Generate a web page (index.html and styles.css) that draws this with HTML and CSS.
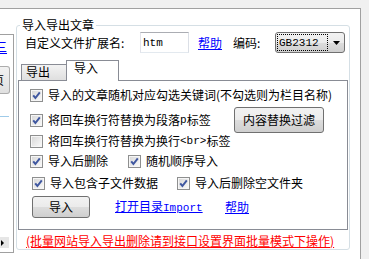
FILE: index.html
```html
<!DOCTYPE html>
<html>
<head>
<meta charset="utf-8">
<link rel="stylesheet" href="styles.css">
</head>
<body>
<div class="window">
  <div class="side">
    <a class="side-link">三</a>
    <div class="side-btn"><span>页</span></div>
    <div class="side-line"></div>
    <div class="side-arrow"><span class="tri"></span></div>
  </div>
  <fieldset class="group">
    <legend>导入导出文章</legend>
    <div class="row-ext">
      <span class="lbl">自定义文件扩展名:</span>
      <span class="input"><span class="lat">htm</span></span>
      <a class="link help1">帮助</a>
      <span class="lbl-enc">编码:</span>
      <span class="select"><span class="focus"><span class="lat">GB2312</span></span><svg class="arrow" width="7" height="4" viewBox="0 0 7 4"><path d="M0 0H7L3.5 4Z" fill="#000"/></svg></span>
    </div>
    <div class="tabs">
      <div class="strip"><span class="tab">导出</span><span class="tab active">导入</span></div>
      <div class="panel">
        <div class="row r1">
          <span class="cb"><span class="box"><svg width="9" height="9" viewBox="0 0 9 9"><path d="M1.2 4.4L3.4 7L7.8 1.4" stroke="#3f57a0" stroke-width="2" fill="none"/></svg></span>导入的文章随机对应勾选关键词(不勾选则为栏目名称)</span>
        </div>
        <div class="row r2">
          <span class="cb w204"><span class="box"><svg width="9" height="9" viewBox="0 0 9 9"><path d="M1.2 4.4L3.4 7L7.8 1.4" stroke="#3f57a0" stroke-width="2" fill="none"/></svg></span>将回车换行符替换为段落<span class="lat">p</span>标签</span>
          <span class="btn btn-filter">内容替换过滤</span>
        </div>
        <div class="row r3">
          <span class="cb"><span class="box"></span>将回车换行符替换为换行<span class="lat">&lt;br&gt;</span>标签</span>
        </div>
        <div class="row r4">
          <span class="cb w98"><span class="box"><svg width="9" height="9" viewBox="0 0 9 9"><path d="M1.2 4.4L3.4 7L7.8 1.4" stroke="#3f57a0" stroke-width="2" fill="none"/></svg></span>导入后删除</span>
          <span class="cb"><span class="box"><svg width="9" height="9" viewBox="0 0 9 9"><path d="M1.2 4.4L3.4 7L7.8 1.4" stroke="#3f57a0" stroke-width="2" fill="none"/></svg></span>随机顺序导入</span>
        </div>
        <div class="row r5">
          <span class="cb w145"><span class="box"><svg width="9" height="9" viewBox="0 0 9 9"><path d="M1.2 4.4L3.4 7L7.8 1.4" stroke="#3f57a0" stroke-width="2" fill="none"/></svg></span>导入包含子文件数据</span>
          <span class="cb"><span class="box"><svg width="9" height="9" viewBox="0 0 9 9"><path d="M1.2 4.4L3.4 7L7.8 1.4" stroke="#3f57a0" stroke-width="2" fill="none"/></svg></span>导入后删除空文件夹</span>
        </div>
        <div class="row r6">
          <span class="btn btn-import">导入</span>
          <a class="link open">打开目录<span class="lat">Import</span></a>
          <a class="link">帮助</a>
        </div>
      </div>
    </div>
    <div class="note">(批量网站导入导出删除请到接口设置界面批量模式下操作)</div>
  </fieldset>
</div>
</body>
</html>
```

FILE: styles.css
```css
* { box-sizing: border-box; }
html, body { margin: 0; padding: 0; }
body {
  width: 369px;
  height: 259px;
  overflow: hidden;
  background: #f0f0f0;
  font: 12px/14px "Noto Sans CJK SC", sans-serif;
  color: #000;
}
.window {
  margin-top: 8px;
  width: 361px;
  height: 251px;
  background: #fff;
  border-top: 1px solid #a0a0a0;
  border-right: 1px solid #a0a0a0;
  display: flex;
  align-items: flex-start;
}
.side {
  width: 14px;
  height: 219px;
  margin-top: 25px;
  border-top: 1px solid #a0a0a0;
  border-bottom: 1px solid #a0a0a0;
  border-right: 1px solid #a0a0a0;
  overflow: hidden;
  display: flex;
  flex-direction: column;
}
.side-link {
  margin: 5px 0 0 -5px;
  color: #0000ff;
  text-decoration: underline;
  line-height: 14px;
  white-space: nowrap;
}
.side-btn {
  margin-top: 12px;
  width: 10px;
  height: 28px;
  border: 1px solid #acacac;
  border-left: none;
  border-radius: 0 3px 3px 0;
  background: linear-gradient(#f2f2f2, #e0e0e0);
  overflow: hidden;
  display: flex;
  align-items: center;
}
.side-btn span { margin-left: -8px; white-space: nowrap; }
.side-line {
  margin-top: 22px;
  width: 9px;
  height: 1px;
  background: #9fcbe9;
}
.side-arrow {
  margin-top: auto;
  margin-bottom: 4px;
  width: 9px;
  height: 11px;
  background: #e6e6e6;
  display: flex;
  align-items: center;
  padding-left: 1px;
}
.tri {
  width: 0;
  height: 0;
  border-top: 3px solid transparent;
  border-bottom: 3px solid transparent;
  border-left: 3px solid #000;
}
.group {
  margin: 9px 0 0 2px;
  width: 334px;
  border: 1px solid #d5dfe5;
  border-radius: 3px;
  padding: 0 0 1px 0;
  min-width: 0;
}
.group legend {
  margin-left: 3px;
  padding: 0 2px;
  line-height: 14px;
}
.row-ext {
  display: flex;
  align-items: center;
  height: 21px;
  padding-left: 8px;
  white-space: nowrap;
}
.lbl { width: 115px; }
.input {
  width: 49px;
  height: 21px;
  border: 1px solid;
  border-color: #abadb3 #dbdfe6 #e3e9ef #e2e3ea;
  padding-left: 2px;
  display: flex;
  align-items: center;
}
.lat {
  font-family: "Liberation Mono", monospace;
  font-size: 11px;
}
.link {
  color: #0000ff;
  text-decoration: underline;
  white-space: nowrap;
}
.help1 { margin-left: 9px; width: 35px; }
.lbl-enc { width: 42px; }
.select {
  width: 70px;
  height: 21px;
  border: 1px solid #707070;
  border-radius: 3px;
  background: linear-gradient(#f2f2f2 0%, #ebebeb 50%, #dddddd 50%, #cfcfcf 100%);
  padding: 1px;
  display: flex;
  align-items: center;
}
.focus {
  width: 51px;
  height: 17px;
  border: 1px dotted #000;
  padding-left: 1px;
  display: flex;
  align-items: center;
}
.arrow { margin-left: 5px; }
.tabs {
  margin: 7px 0 0 1px;
  width: 330px;
}
.strip {
  display: flex;
  align-items: flex-end;
  height: 20px;
  padding-left: 3px;
}
.tab {
  width: 45px;
  height: 16px;
  border: 1px solid #898c95;
  border-bottom: none;
  border-right: none;
  padding-left: 4px;
  background: linear-gradient(#f3f3f3, #dfdfdf);
  line-height: 14px;
}
.tab.active {
  width: 53px;
  height: 21px;
  margin-bottom: -1px;
  border-right: 1px solid #898c95;
  background: #fff;
  padding-left: 7px;
  position: relative;
  z-index: 1;
}
.panel {
  height: 150px;
  border: 1px solid #898c95;
  padding: 4px 0 0 11px;
}
.row {
  display: flex;
  align-items: center;
  height: 20px;
  white-space: nowrap;
}
.r2 { margin-top: 5px; }
.r3 { margin-top: 1px; }
.r5 { margin-top: 2px; padding-left: 2px; }
.r6 { margin-top: 3px; height: 22px; padding-left: 2px; }
.cb { display: flex; align-items: center; }
.w204 { width: 204px; }
.w98 { width: 98px; }
.w145 { width: 145px; }
.box {
  width: 13px;
  height: 13px;
  margin-right: 5px;
  border: 1px solid #8e8f8f;
  background: linear-gradient(135deg, #d6d6d6, #fbfbfb);
  box-shadow: inset 0 0 0 1px #f6f6f6;
  display: flex;
  align-items: center;
  justify-content: center;
  flex: none;
}
.btn {
  border: 1px solid #707070;
  border-radius: 3px;
  background: linear-gradient(#f2f2f2 0%, #ebebeb 50%, #dddddd 50%, #cfcfcf 100%);
  display: flex;
  align-items: center;
  justify-content: center;
}
.btn-filter { width: 90px; height: 26px; }
.btn-import { width: 58px; height: 22px; }
.open { margin-left: 25px; width: 110px; }
.note {
  margin: 4px 0 0 9px;
  color: #ff0000;
  text-decoration: underline;
  white-space: nowrap;
}
```
